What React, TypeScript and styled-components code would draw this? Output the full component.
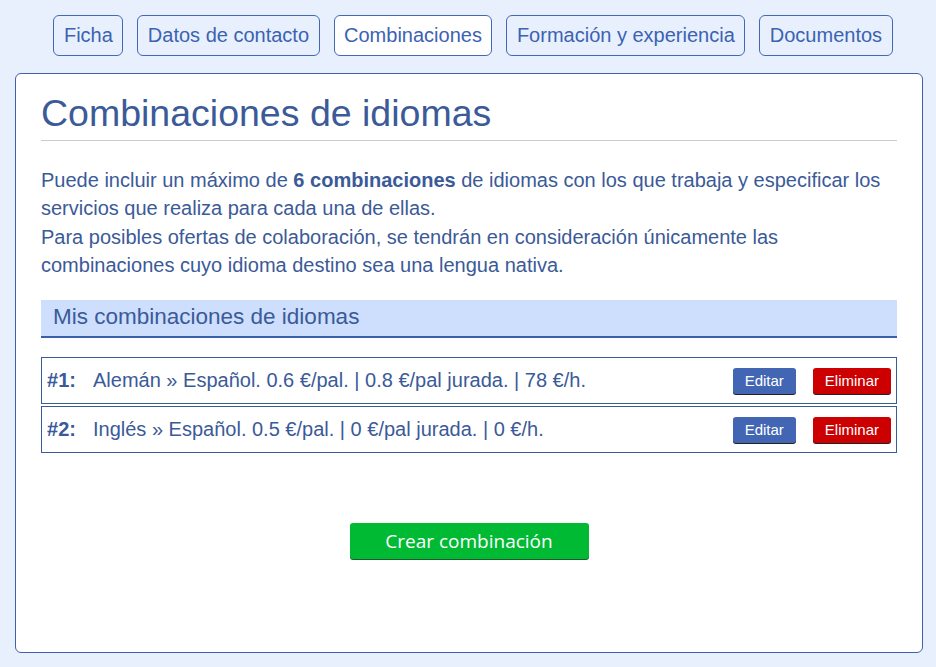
import React from "react";
import styled, { createGlobalStyle } from "styled-components";

const GlobalStyle = createGlobalStyle`
  html, body {
    margin: 0;
    padding: 0;
    background: #e8f0fd;
    font-family: "Liberation Sans", Arial, sans-serif;
  }
`;

const Page = styled.div`
  min-height: 667px;
  box-sizing: border-box;
  padding: 15px 13px 14px 15px;
`;

const Tabs = styled.nav`
  display: flex;
  justify-content: center;
  gap: 14px;
  padding-left: 8px;
  margin-bottom: 17px;
`;

const Tab = styled.a<{ $active?: boolean }>`
  display: block;
  padding: 8px 9.5px;
  line-height: 23px;
  font-size: 20px;
  color: #3b62b3;
  text-decoration: none;
  border: 1px solid #4468b5;
  border-radius: 6px;
  background: ${({ $active }) => ($active ? "#ffffff" : "transparent")};
  cursor: pointer;
`;

const Panel = styled.div`
  background: #fff;
  border: 1px solid #3f62ae;
  border-radius: 6px;
  height: 580px;
  box-sizing: border-box;
  padding: 18px 25px 0 25px;
`;

const Title = styled.h1`
  margin: 0;
  padding-bottom: 6px;
  font-weight: normal;
  font-size: 37.5px;
  line-height: 42px;
  color: #3b5a98;
  border-bottom: 1px solid #cccccc;
`;

const Intro = styled.p`
  margin: 24.5px 0 20.5px;
  font-size: 20px;
  line-height: 28.5px;
  color: #3b5a98;
  b {
    font-weight: bold;
  }
`;

const SectionHeader = styled.h2`
  margin: 0;
  padding: 0 12px;
  height: 36px;
  line-height: 34px;
  font-size: 22.5px;
  font-weight: normal;
  color: #3b5a98;
  background: #cddffd;
  border-bottom: 2px solid #3d5fa8;
`;

const List = styled.div`
  display: flex;
  flex-direction: column;
  gap: 2px;
  margin-top: 19px;
`;

const Row = styled.div`
  display: flex;
  align-items: center;
  height: 47px;
  box-sizing: border-box;
  border: 1px solid #3b5a98;
  padding: 0 5px;
  font-size: 20px;
  color: #3b5a98;
`;

const Num = styled.span`
  width: 46px;
  font-weight: bold;
`;

const Desc = styled.span`
  flex: 1;
`;

const SmallButton = styled.button<{ $danger?: boolean }>`
  height: 26px;
  padding: 0 12px;
  margin-left: 17px;
  border: none;
  border-radius: 3px;
  box-shadow: 0 1px 0 #222;
  background: ${({ $danger }) => ($danger ? "#cc0000" : "#4266b4")};
  color: #fff;
  font-family: "Liberation Sans", Arial, sans-serif;
  font-size: 15px;
  cursor: pointer;
`;

const Actions = styled.div`
  display: flex;
  justify-content: center;
  margin-top: 70px;
`;

const CreateButton = styled.button`
  width: 239px;
  height: 36px;
  border: none;
  border-radius: 3px;
  box-shadow: 0 1px 0 #1f5a2a;
  background: #00ba34;
  color: #fff;
  font-family: "Open Sans", sans-serif;
  font-size: 19px;
  cursor: pointer;
`;

const combos = [
  { n: 1, text: "Alemán » Español. 0.6 €/pal. | 0.8 €/pal jurada. | 78 €/h." },
  { n: 2, text: "Inglés » Español. 0.5 €/pal. | 0 €/pal jurada. | 0 €/h." },
];

const App: React.FC = () => {
  return (
    <Page>
      <GlobalStyle />
      <Tabs>
        <Tab>Ficha</Tab>
        <Tab>Datos de contacto</Tab>
        <Tab $active>Combinaciones</Tab>
        <Tab>Formación y experiencia</Tab>
        <Tab>Documentos</Tab>
      </Tabs>
      <Panel>
        <Title>Combinaciones de idiomas</Title>
        <Intro>
          Puede incluir un máximo de <b>6 combinaciones</b> de idiomas con los que trabaja y
          especificar los servicios que realiza para cada una de ellas.
          <br />
          Para posibles ofertas de colaboración, se tendrán en consideración únicamente las
          combinaciones cuyo idioma destino sea una lengua nativa.
        </Intro>
        <SectionHeader>Mis combinaciones de idiomas</SectionHeader>
        <List>
          {combos.map(c => (
            <Row key={c.n}>
              <Num>#{c.n}:</Num>
              <Desc>{c.text}</Desc>
              <SmallButton>Editar</SmallButton>
              <SmallButton $danger>Eliminar</SmallButton>
            </Row>
          ))}
        </List>
        <Actions>
          <CreateButton>Crear combinación</CreateButton>
        </Actions>
      </Panel>
    </Page>
  );
};

export default App;
